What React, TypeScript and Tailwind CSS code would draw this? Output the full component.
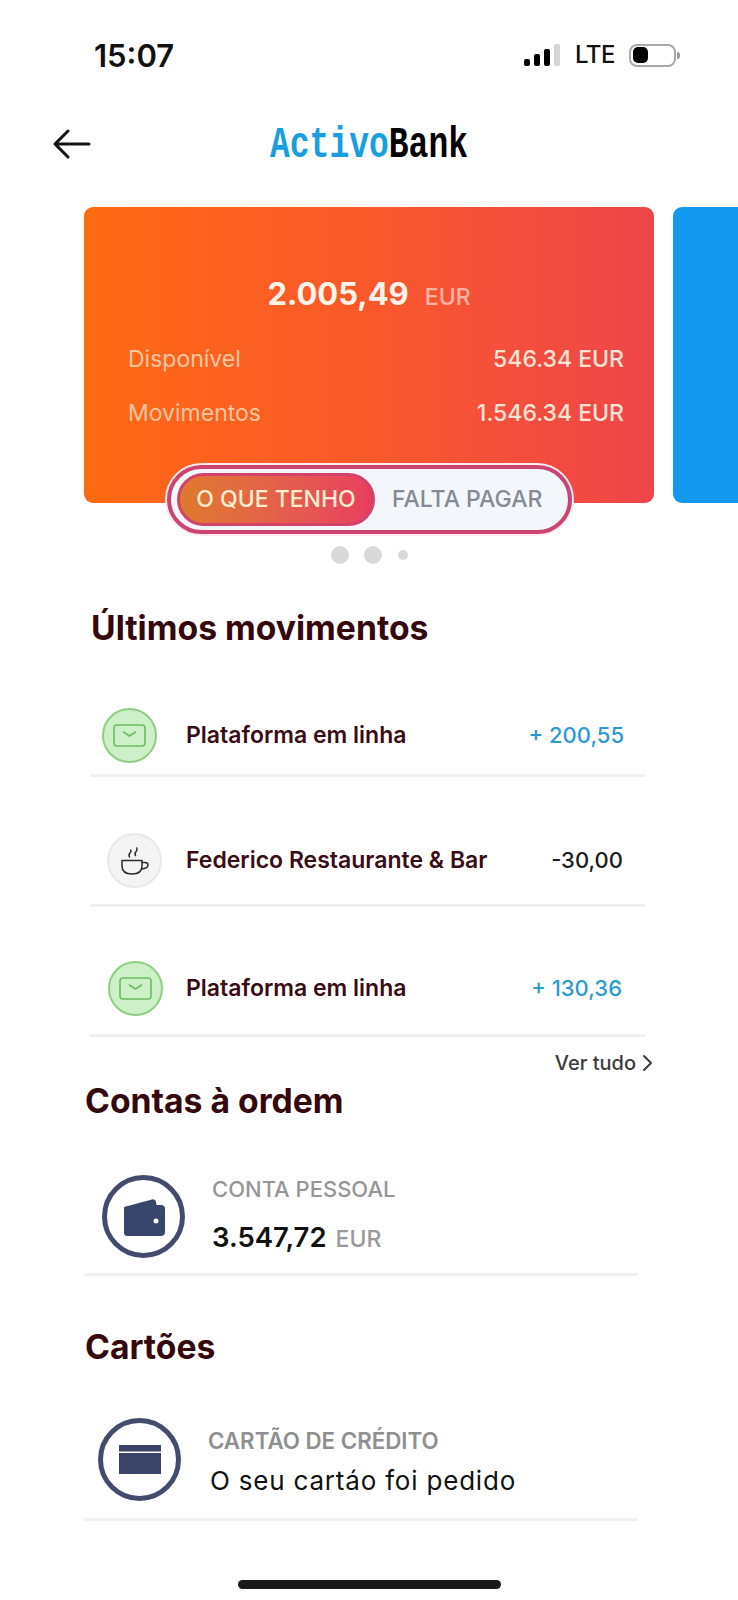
const inter = "font-['Inter',sans-serif]";

function SignalBattery() {
  return (
    <div className="flex items-center">
      <div className="flex items-end gap-[4px]">
        <div className="h-[7px] w-[6px] rounded-[2px] bg-black" />
        <div className="h-[12px] w-[6px] rounded-[2px] bg-black" />
        <div className="h-[17px] w-[6px] rounded-[2px] bg-black" />
        <div className="h-[22px] w-[6px] rounded-[2px] bg-[#d4d4d4]" />
      </div>
      <span className="ml-[15px] text-[24px] leading-none font-medium tracking-[-0.5px] text-[#111]">LTE</span>
      <div className="ml-[14px] flex items-center">
        <div className="flex h-[23px] w-[47px] items-center rounded-[8px] border-2 border-[#a9a9a9] px-[2px]">
          <div className="h-[16px] w-[15px] rounded-[5px] bg-black" />
        </div>
        <div className="ml-[1px] h-[7px] w-[3px] rounded-r-full bg-[#999]" />
      </div>
    </div>
  );
}

function EnvelopeIcon() {
  return (
    <svg width="33" height="23" viewBox="0 0 33 23" fill="none" stroke="#6dbb63" strokeWidth="1.6">
      <rect x="1" y="1" width="31" height="21" rx="3" />
      <path d="M10.5 8 L16.5 12 L22.5 8" strokeLinecap="round" strokeLinejoin="round" />
    </svg>
  );
}

function CupIcon() {
  return (
    <svg width="30" height="30" viewBox="0 0 30 30" fill="none" stroke="#2b2b2b" strokeWidth="1.5" strokeLinecap="round" strokeLinejoin="round">
      <path d="M2 14.5 H22 V20 C22 25.5 18.5 28 12 28 C5.5 28 2 25.5 2 20 Z" />
      <path d="M22 16.5 H25 C27 16.5 28 17.6 28 19 C28 20.8 26.4 22.5 21.5 23" />
      <path d="M9.5 11 C8.5 9.2 9 8 10 7 C11 6 11.3 5.2 10.8 4" />
      <path d="M15.5 9.5 C14.6 8 15 6.8 16 5.8 C17 4.8 17.4 3.6 16.8 2" />
    </svg>
  );
}

function WalletIcon() {
  return (
    <svg width="42" height="38" viewBox="0 0 42 38" fill="none">
      <path d="M1 9 L29 1.5 C31 1 32.5 2 33 4 L33.5 7 H38 C40.5 7 42 8.5 42 11 V34 C42 36.5 40.5 38 38 38 H4 C2 38 1 36.5 1 34.5 Z" fill="#39466b" />
      <circle cx="33" cy="23" r="2.5" fill="#ffffff" />
    </svg>
  );
}

function CardIcon() {
  return (
    <svg width="42" height="29" viewBox="0 0 42 29">
      <rect x="0" y="0" width="42" height="6.5" fill="#3b4468" />
      <rect x="0" y="8" width="42" height="21" fill="#3b4468" />
    </svg>
  );
}

function Divider() {
  return <div className="h-[3px] bg-[#f0f0f0]" />;
}

function MoveRow({
  icon,
  iconClass,
  label,
  amount,
  amountClass,
}: {
  icon: React.ReactNode;
  iconClass: string;
  label: string;
  amount: string;
  amountClass: string;
}) {
  return (
    <div className="mr-[93px] ml-[90px] flex items-center">
      <div className={`flex h-[55px] w-[55px] shrink-0 items-center justify-center rounded-full ${iconClass}`}>
        {icon}
      </div>
      <span className="text-[23px] font-semibold whitespace-nowrap text-[#3a0c14]">{label}</span>
      <span className={`ml-auto text-[22px] font-medium whitespace-nowrap ${amountClass}`}>{amount}</span>
    </div>
  );
}

function Heading({ children, className }: { children: React.ReactNode; className: string }) {
  return (
    <h2 className={`flex h-[44px] items-center text-[33.7px] font-bold text-[#35080e] ${className}`}>{children}</h2>
  );
}

export default function App() {
  return (
    <div className={`flex h-[1600px] w-[738px] flex-col overflow-hidden bg-white ${inter}`}>
      <div className="flex h-[110px] items-center justify-between pr-[58px] pl-[94px]">
        <span className="text-[31px] leading-none font-semibold text-[#111]">15:07</span>
        <div className="pl-[3px]">
          <SignalBattery />
        </div>
      </div>

      <div className="relative flex h-[66px] items-center justify-center">
        <svg className="absolute top-[19px] left-[53px]" width="38" height="30" viewBox="0 0 38 30" fill="none" stroke="#111" strokeWidth="3" strokeLinecap="round" strokeLinejoin="round">
          <path d="M36 15 H2 M15 2 L2 15 L15 28" />
        </svg>
        <span className="mt-[4px] origin-center scale-y-[1.32] font-['Liberation_Mono',monospace] text-[33px] leading-none font-bold">
          <span className="text-[#1a9ee2]">Activo</span>
          <span className="text-black">Bank</span>
        </span>
      </div>

      <div className="relative mt-[31px] h-[326px]">
        <div className="flex gap-[19px] pl-[84px]">
          <div className="h-[296px] w-[570px] shrink-0 rounded-[9px] bg-gradient-to-r from-[#ff6a10] via-[#f9582a] to-[#ee4549] pr-[30px] pl-[44px]">
            <div className="mt-[66px] flex items-baseline justify-center pr-[19px] pl-[5px]">
              <span className="text-[31px] leading-[42px] font-bold text-[#fff4ea]">2.005,49</span>
              <span className="ml-[16px] text-[23px] font-medium text-white/55">EUR</span>
            </div>
            <div className="mt-[27px] flex items-center justify-between text-[23px] leading-[34px]">
              <span className="text-[#fbc6a2]">Disponível</span>
              <span className="font-medium text-[#fde4d6]">546.34 EUR</span>
            </div>
            <div className="mt-[20px] flex items-center justify-between text-[23px] leading-[34px]">
              <span className="text-[#fbc6a2]">Movimentos</span>
              <span className="font-medium text-[#fde4d6]">1.546.34 EUR</span>
            </div>
          </div>
          <div className="h-[296px] w-[100px] shrink-0 rounded-[9px] bg-[#1298ee]" />
        </div>

        <div className="absolute top-[258px] left-[167px] flex h-[69px] w-[405px] items-center rounded-full border-[4px] border-[#cc4570] bg-[#f3f6fb] pl-[6px] shadow-[0_0_0_2px_#ffe9f2]">
          <div className="flex h-[53px] w-[198px] items-center justify-center rounded-full border-[3px] border-[#d2436a] bg-gradient-to-r from-[#df7a2b] to-[#e83e5f] text-[23px] font-medium text-[#fdeccf]">
            O QUE TENHO
          </div>
          <span className="ml-[17px] text-[23px] font-medium text-[#858b94]">FALTA PAGAR</span>
        </div>
      </div>

      <div className="mt-[13px] flex h-[18px] items-center pl-[331px]">
        <div className="h-[18px] w-[18px] rounded-full bg-[#d9d9d9]" />
        <div className="ml-[15px] h-[18px] w-[18px] rounded-full bg-[#d9d9d9]" />
        <div className="ml-[16px] h-[10px] w-[10px] rounded-full bg-[#d9d9d9]" />
      </div>

      <Heading className="mt-[42px] ml-[91px]">Últimos movimentos</Heading>

      <div className="mt-[58px]">
        <MoveRow
          iconClass="mr-[29px] ml-[12px] border-2 border-[#8fcf83] bg-[#cdf0c8]"
          icon={<EnvelopeIcon />}
          label="Plataforma em linha"
          amount="+ 200,55"
          amountClass="mr-[21px] text-[#2a9ad3]"
        />
      </div>
      <div className="mt-[11px] mr-[93px] ml-[90px]"><Divider /></div>

      <div className="mt-[56px]">
        <MoveRow
          iconClass="mr-[24px] ml-[17px] border-2 border-[#e8e8e8] bg-[#f4f4f4]"
          icon={<CupIcon />}
          label="Federico Restaurante & Bar"
          amount="-30,00"
          amountClass="mr-[22px] text-[#1c1c1c]"
        />
      </div>
      <div className="mt-[16px] mr-[93px] ml-[90px]"><Divider /></div>

      <div className="mt-[54px]">
        <MoveRow
          iconClass="mr-[23px] ml-[18px] border-2 border-[#8fcf83] bg-[#cdf0c8]"
          icon={<EnvelopeIcon />}
          label="Plataforma em linha"
          amount="+ 130,36"
          amountClass="mr-[23px] text-[#2a9ad3]"
        />
      </div>
      <div className="mt-[18px] mr-[93px] ml-[90px]"><Divider /></div>

      <div className="mt-[14px] mr-[85px] flex h-[24px] items-center justify-end text-[#3b3b3b]">
        <span className="text-[20px] font-medium">Ver tudo</span>
        <svg className="ml-[6px]" width="11" height="18" viewBox="0 0 11 18" fill="none" stroke="#3b3b3b" strokeWidth="2" strokeLinecap="round" strokeLinejoin="round">
          <path d="M2 2 L9 9 L2 16" />
        </svg>
      </div>

      <Heading className="mt-[4px] ml-[85px]">Contas à ordem</Heading>

      <div className="mt-[52px] ml-[102px] flex items-center">
        <div className="flex h-[83px] w-[83px] shrink-0 items-center justify-center rounded-full border-[5px] border-[#434c6c]">
          <WalletIcon />
        </div>
        <div className="ml-[27px]">
          <div className="text-[22px] leading-[26px] font-medium text-[#969696]">CONTA PESSOAL</div>
          <div className="mt-[17px] flex items-baseline leading-[36px]">
            <span className="text-[27.5px] font-semibold text-[#111]">3.547,72</span>
            <span className="ml-[9px] text-[23px] font-medium text-[#9b9b9b]">EUR</span>
          </div>
        </div>
      </div>
      <div className="mt-[15px] mr-[100px] ml-[84px]"><Divider /></div>

      <Heading className="mt-[49px] ml-[85px]">Cartões</Heading>

      <div className="mt-[49px] ml-[98px] flex items-center">
        <div className="flex h-[83px] w-[83px] shrink-0 items-center justify-center rounded-full border-[5px] border-[#434c6c]">
          <CardIcon />
        </div>
        <div className="ml-[27px] pt-[6px]">
          <div className="text-[22.3px] leading-[26px] font-semibold text-[#8f8f8f]">CARTÃO DE CRÉDITO</div>
          <div className="mt-[10px] pl-[2px] text-[26px] leading-[34px] tracking-[0.8px] text-[#111]">O seu cartáo foi pedido</div>
        </div>
      </div>
      <div className="mt-[17px] mr-[100px] ml-[84px]"><Divider /></div>

      <div className="mt-[59px] ml-[238px] h-[9px] w-[263px] rounded-full bg-[#1a1a1a]" />
    </div>
  );
}
